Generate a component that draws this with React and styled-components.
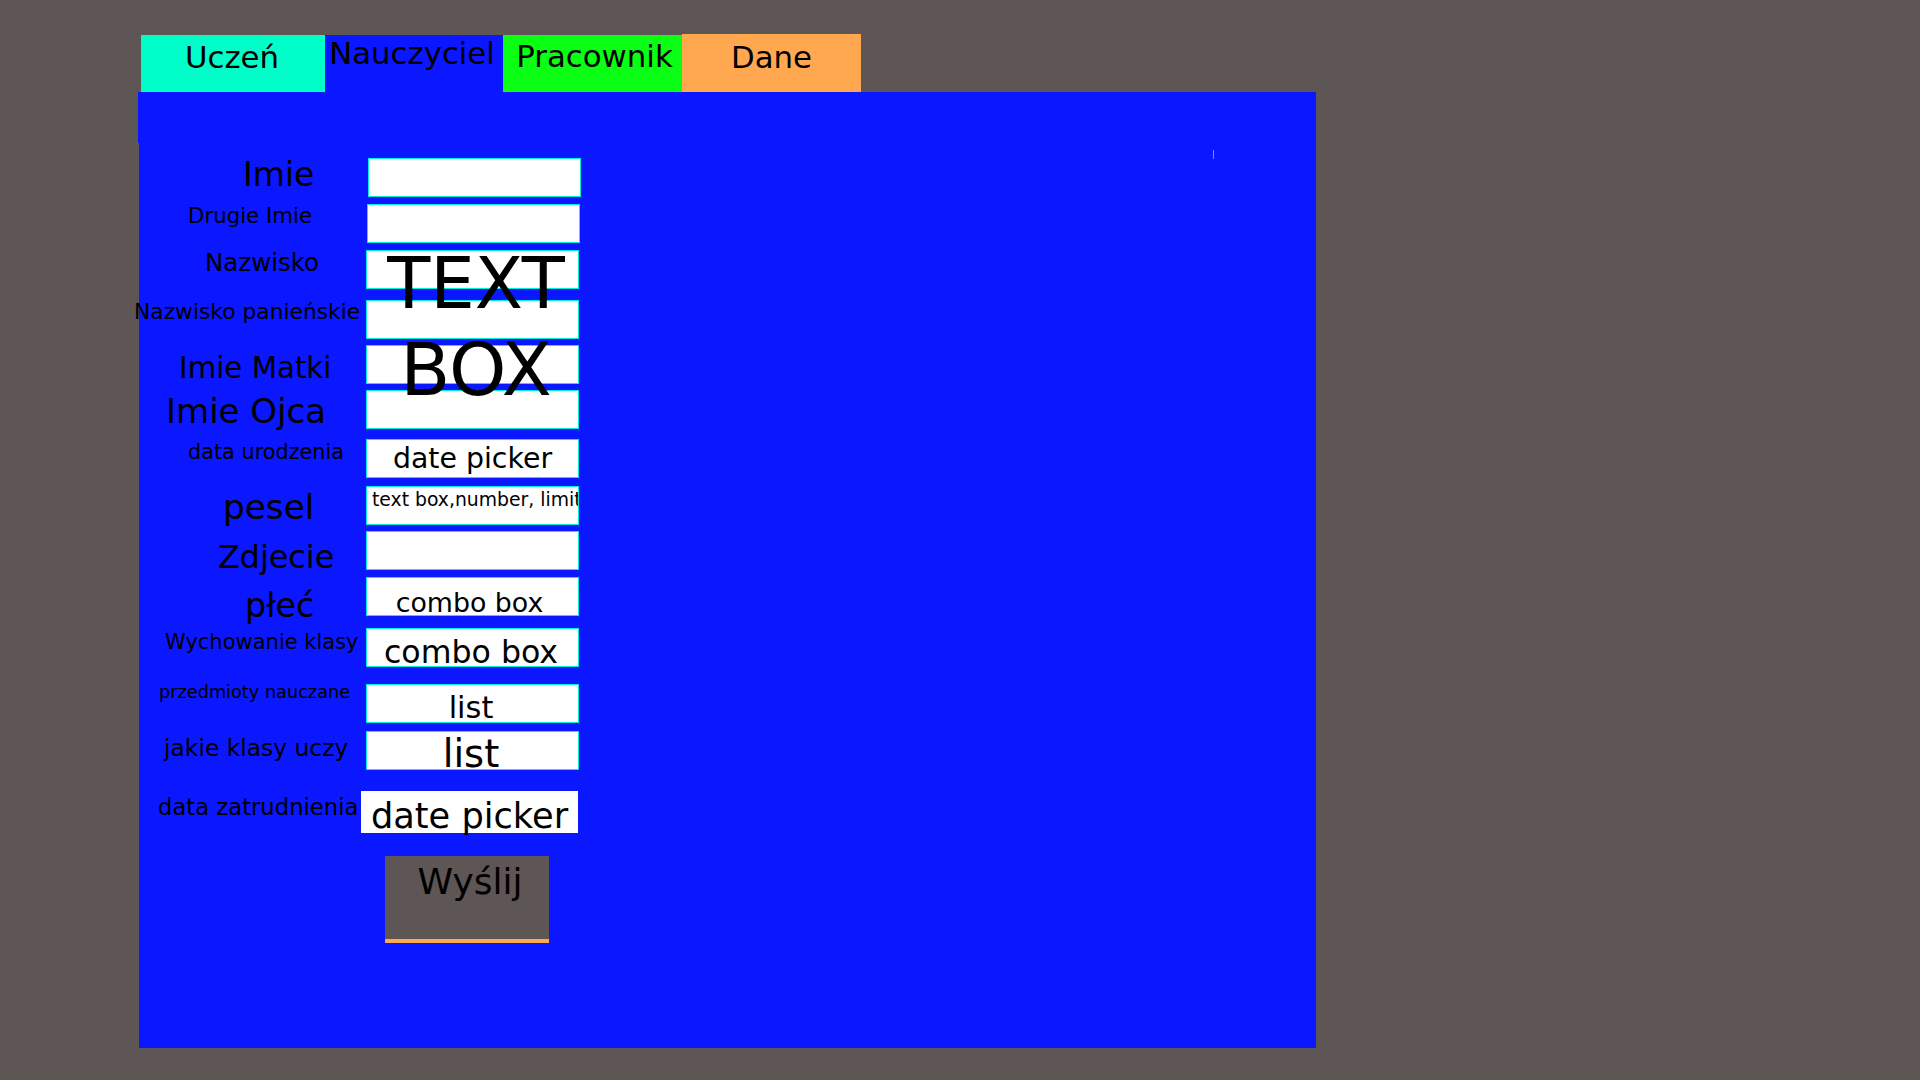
import React from "react";
import styled, { createGlobalStyle } from "styled-components";

const GlobalStyle = createGlobalStyle`
  html, body { margin: 0; padding: 0; }
  body {
    background: #5e5654;
    font-family: "DejaVu Sans", "Liberation Sans", sans-serif;
    color: #000;
  }
`;

const Page = styled.div`
  min-height: 1080px;
  width: 1920px;
  background: #5e5654;
  padding: 34px 0 0 138px;
  box-sizing: border-box;
`;

const TabBar = styled.div`
  display: flex;
  align-items: flex-end;
  height: 58px;
  margin-left: 3px;
`;

const Tab = styled.div`
  width: ${(p) => p.$w}px;
  height: ${(p) => p.$h}px;
  background: ${(p) => p.$bg};
  display: flex;
  justify-content: center;
  align-items: flex-start;
  box-sizing: border-box;
  padding-top: ${(p) => p.$ty}px;
`;

const TabText = styled.span`
  display: inline-block;
  font-size: 30.8px;
  line-height: 1;
  white-space: nowrap;
  margin-left: ${(p) => p.$shift * 2}px;
`;

const Panel = styled.div`
  position: relative;
  margin-left: 1px;
  width: 1177px;
  height: 956px;
  background: #0a17ff;
  padding-top: 66px;
  box-sizing: border-box;
`;

const PanelLip = styled.div`
  position: absolute;
  left: -1px;
  top: 0;
  width: 1px;
  height: 51px;
  background: #0a17ff;
`;

const Caret = styled.div`
  position: absolute;
  left: 1074px;
  top: 58px;
  width: 1px;
  height: 9px;
  background: rgba(200, 210, 255, 0.6);
`;

const Form = styled.div`
  position: relative;
  display: flex;
  flex-direction: column;
`;

const Row = styled.div`
  display: grid;
  grid-template-columns: 227px auto;
  height: ${(p) => p.$h}px;
  margin-top: ${(p) => p.$gap}px;
`;

const Label = styled.div`
  align-self: start;
  justify-self: start;
  white-space: nowrap;
  line-height: 1;
  font-size: ${(p) => p.$size}px;
  margin-left: ${(p) => p.$x}px;
  margin-top: ${(p) => p.$y}px;
`;

const Field = styled.div`
  box-sizing: border-box;
  width: ${(p) => p.$w}px;
  height: ${(p) => p.$h}px;
  margin-left: ${(p) => p.$x}px;
  background: #fff;
  border: ${(p) => (p.$plain ? "none" : "1px solid #00f0d8")};
  overflow: ${(p) => (p.$left ? "hidden" : "visible")};
  display: flex;
  justify-content: ${(p) => (p.$left ? "flex-start" : "center")};
  align-items: flex-start;
  padding-left: ${(p) => (p.$left ? 5 : 0)}px;
`;

const FieldText = styled.span`
  white-space: nowrap;
  line-height: 1;
  font-size: ${(p) => p.$size}px;
  margin-top: ${(p) => p.$y}px;
  margin-left: ${(p) => p.$shift * 2}px;
`;

const Overlay = styled.div`
  position: absolute;
  left: 227px;
  top: 82.8px;
  width: 220px;
  text-align: center;
  pointer-events: none;
  white-space: nowrap;
`;

const OverlayLine = styled.div`
  font-size: ${(p) => p.$size}px;
  line-height: 86px;
`;

const SubmitButton = styled.button`
  box-sizing: border-box;
  width: 164px;
  height: 87px;
  margin-left: 246px;
  margin-top: 23px;
  background: #5e5654;
  border: none;
  border-bottom: 4px solid #ffa850;
  padding: 8px 0 0 6px;
  display: flex;
  justify-content: center;
  align-items: flex-start;
  font-family: "DejaVu Sans", "Liberation Sans", sans-serif;
  font-size: 36px;
  line-height: 1;
  color: #000;
`;

const tabs = [
  { text: "Uczeń", w: 184, h: 57, bg: "#00ffc8", ty: 6.8, shift: -1 },
  { text: "Nauczyciel", w: 178, h: 57, bg: "#0a17ff", ty: 3.4, shift: -2 },
  { text: "Pracownik", w: 179, h: 57, bg: "#0aff14", ty: 5.8, shift: 2 },
  { text: "Dane", w: 179, h: 58, bg: "#ffa850", ty: 7.8, shift: 0 },
];

const rows = [
  { label: "Imie", gap: 0, lx: 104, ly: 0, ls: 33, fx: 2 },
  { label: "Drugie Imie", gap: 7, lx: 49, ly: 1, ls: 21.3, fx: 1 },
  { label: "Nazwisko", gap: 7, lx: 66, ly: 1, ls: 24.5, fx: 0 },
  { label: "Nazwisko panieńskie", gap: 11, lx: -5, ly: 1, ls: 21.8, fx: 0 },
  { label: "Imie Matki", gap: 6, lx: 40, ly: 8.5, ls: 29.3, fx: 0 },
  { label: "Imie Ojca", gap: 6, lx: 27, ly: 3.5, ls: 34, fx: 0 },
  { label: "data urodzenia", gap: 10, lx: 49, ly: 3, ls: 20.8, fx: 0, text: "date picker", ts: 28.4, ty: 5, shift: 0 },
  { label: "pesel", gap: 8, lx: 84, ly: 4, ls: 34.3, fx: 0, text: "text box,number, limit", ts: 18.8, ty: 4, shift: 0, left: true },
  { label: "Zdjecie", gap: 6, lx: 79, ly: 10, ls: 31.8, fx: 0 },
  { label: "płeć", gap: 7, lx: 106, ly: 12, ls: 33.3, fx: 0, text: "combo box", ts: 26.8, ty: 11.5, shift: -3 },
  { label: "Wychowanie klasy", gap: 12, lx: 26, ly: 4, ls: 21, fx: 0, text: "combo box", ts: 31.6, ty: 7.5, shift: -1.5 },
  { label: "przedmioty nauczane", gap: 17, lx: 20, ly: 0, ls: 17.7, fx: 0, text: "list", ts: 30.4, ty: 8, shift: -1.5 },
  { label: "jakie klasy uczy", gap: 8, lx: 25, ly: 6, ls: 23.4, fx: 0, text: "list", ts: 38.5, ty: 3, shift: -1.5 },
  { label: "data zatrudnienia", gap: 21, lx: 19, ly: 5, ls: 22.7, fx: -5, text: "date picker", ts: 35.2, ty: 6.5, shift: 0, plain: true, w: 217, h: 42 },
];

export default function App() {
  return (
    <Page>
      <GlobalStyle />
      <TabBar>
        {tabs.map((t) => (
          <Tab key={t.text} $w={t.w} $h={t.h} $bg={t.bg} $ty={t.ty}>
            <TabText $shift={t.shift}>{t.text}</TabText>
          </Tab>
        ))}
      </TabBar>
      <Panel>
        <PanelLip />
        <Caret />
        <Form>
          {rows.map((r) => (
            <Row key={r.label} $gap={r.gap} $h={r.h || 39}>
              <Label $size={r.ls} $x={r.lx} $y={r.ly}>
                {r.label}
              </Label>
              <Field $w={r.w || 213} $h={r.h || 39} $x={r.fx} $plain={r.plain} $left={r.left}>
                {r.text && (
                  <FieldText $size={r.ts} $y={r.ty} $shift={r.shift}>
                    {r.text}
                  </FieldText>
                )}
              </Field>
            </Row>
          ))}
          <Overlay>
            <OverlayLine $size={70.5}>TEXT</OverlayLine>
            <OverlayLine $size={73}>BOX</OverlayLine>
          </Overlay>
          <div>
            <SubmitButton>Wyślij</SubmitButton>
          </div>
        </Form>
      </Panel>
    </Page>
  );
}
